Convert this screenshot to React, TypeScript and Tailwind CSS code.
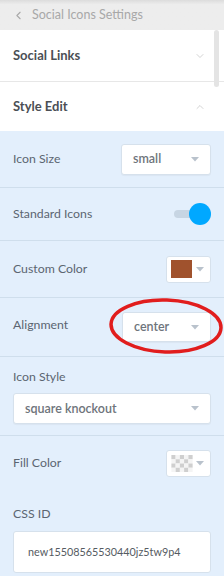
import { ChevronDown, ChevronLeft, ChevronUp } from "lucide-react";

function Caret() {
  return (
    <svg width="8" height="5" viewBox="0 0 8 5" className="shrink-0">
      <path d="M0 0 L8 0 L4 4.5 Z" fill="#b9c2cc" />
    </svg>
  );
}

function SelectBox({ value, className }: { value: string; className: string }) {
  return (
    <div
      className={`flex items-center justify-between rounded-[3px] border border-[#d6e1ec] bg-white pl-[11px] pr-[11px] shadow-[0_1px_1px_rgba(0,0,0,0.04)] ${className}`}
    >
      <span className="text-[12.5px] font-semibold text-[#6e747b]">{value}</span>
      <Caret />
    </div>
  );
}

function ColorBox({ children }: { children: React.ReactNode }) {
  return (
    <div className="flex h-[27px] w-[45px] items-center justify-between rounded-[3px] border border-[#d6e1ec] bg-white pl-[4px] pr-[6px]">
      {children}
      <Caret />
    </div>
  );
}

function Checker() {
  const cells = [];
  for (let r = 0; r < 4; r++) {
    for (let c = 0; c < 5; c++) {
      cells.push(
        <rect key={`${r}-${c}`} x={c * 4.4} y={r * 4.4} width="4.4" height="4.4" fill={(r + c) % 2 === 0 ? "#cfcfcf" : "#f4f4f4"} />
      );
    }
  }
  return (
    <svg width="22" height="17" viewBox="0 0 22 17.6">
      {cells}
    </svg>
  );
}

export default function App() {
  return (
    <div className="relative h-[576px] w-[224px] overflow-hidden bg-[#e3effc] font-['Lato','Noto_Sans',sans-serif]">
      {/* header */}
      <div className="flex h-[30px] items-center gap-[7px] bg-gradient-to-b from-[#dcdcdc] to-[#ededed] to-[15%] pl-[12px]">
        <ChevronLeft size={13} strokeWidth={2} color="#a9a9a9" />
        <span className="text-[12.5px] text-[#a8a8a8]">Social Icons Settings</span>
      </div>

      {/* accordion heads */}
      <div className="bg-white">
        <div className="flex h-[52px] items-center justify-between border-b border-[#e7e7e7] pl-[13px] pr-[18px]">
          <span className="text-[13px] font-bold text-[#4b4f55]">Social Links</span>
          <ChevronDown size={12} strokeWidth={1.5} color="#c4c4c4" />
        </div>
        <div className="flex h-[49px] items-center justify-between pl-[13px] pr-[18px]">
          <span className="text-[13px] font-bold text-[#4b4f55]">Style Edit</span>
          <ChevronUp size={12} strokeWidth={1.5} color="#c4c4c4" />
        </div>
      </div>
      <div className="absolute left-[214px] top-[30px] h-[57px] w-[5px] rounded-[3px] bg-[#e4e4e4]" />

      {/* style edit body */}
      <div className="text-[12.3px] text-[#5b6571]">
        <div className="flex h-[57px] items-center justify-between border-b border-[#cfdeec] pl-[13px] pr-[13px]">
          <span>Icon Size</span>
          <SelectBox value="small" className="h-[31px] w-[90px]" />
        </div>
        <div className="flex h-[53px] items-center justify-between border-b border-[#cfdeec] pl-[13px] pr-[13px]">
          <span>Standard Icons</span>
          <div className="relative h-[22px] w-[37px]">
            <div className="absolute left-0 top-[7px] h-[8px] w-[30px] rounded-full bg-[#c7d5e3]" />
            <div className="absolute right-0 top-0 h-[22px] w-[22px] rounded-full bg-[#00a8ff]" />
          </div>
        </div>
        <div className="flex h-[57px] items-center justify-between border-b border-[#cfdeec] pl-[13px] pr-[13px]">
          <span>Custom Color</span>
          <ColorBox>
            <div className="h-[18px] w-[21px] bg-[#a0522d]" />
          </ColorBox>
        </div>
        <div className="relative flex h-[59px] items-center justify-between border-b border-[#cfdeec] pl-[13px] pr-[13px]">
          <span className="-mt-[3px]">Alignment</span>
          <SelectBox value="center" className="h-[30px] w-[89px]" />
          <svg className="absolute left-[108px] top-[0px]" width="116" height="58" viewBox="0 0 116 58">
            <ellipse cx="58" cy="28" rx="55" ry="26" fill="none" stroke="#e11d1d" strokeWidth="3.5" transform="rotate(2 58 28)" />
          </svg>
        </div>
        <div className="flex h-[79px] flex-col border-b border-[#cfdeec] pl-[13px] pr-[13px] pt-[11px]">
          <span>Icon Style</span>
          <SelectBox value="square knockout" className="mt-[7px] h-[31px] w-full" />
        </div>
        <div className="flex h-[54px] items-center justify-between pl-[13px] pr-[13px]">
          <span>Fill Color</span>
          <ColorBox>
            <Checker />
          </ColorBox>
        </div>
        <div className="flex flex-col pl-[13px] pr-[13px] pt-[15px]">
          <span>CSS ID</span>
          <div className="mt-[8px] flex h-[42px] w-full items-center rounded-[3px] border border-[#d6e1ec] bg-white pl-[14px] text-[10.8px] text-[#555b62]">
            new15508565530440jz5tw9p4
          </div>
        </div>
      </div>
    </div>
  );
}
